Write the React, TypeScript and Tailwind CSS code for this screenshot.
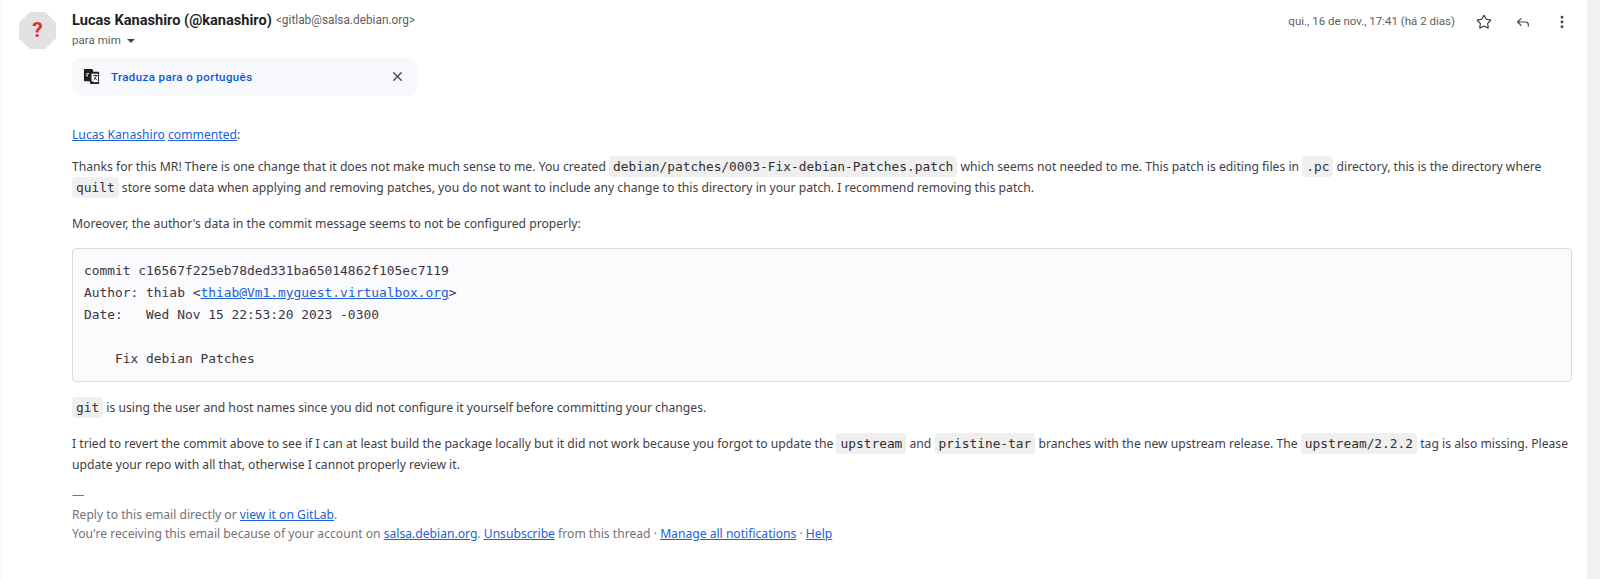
import React from "react";
import { Star, Reply, MoreVertical, X } from "lucide-react";

const A = ({ children }: { children: React.ReactNode }) => (
  <a href="#" className="text-[#1a62d6] underline">{children}</a>
);
const C = ({ children }: { children: React.ReactNode }) => (
  <code className="rounded-[4px] bg-[#efeff0] px-[4px] py-[3px] font-['DejaVu_Sans_Mono',monospace] text-[12.85px] text-[#303030]">{children}</code>
);

export default function App() {
  return (
    <div className="flex h-[579px] w-[1600px] overflow-hidden bg-white font-['Noto_Sans',sans-serif] text-[12.17px] text-[#3f3e44]">
      <div className="w-[2px] shrink-0 bg-[#f6f8fc]" />
      <main className="flex min-w-0 flex-1 flex-col">
        <header className="flex">
          <div className="ml-[17px] mt-[12px] flex h-[37px] w-[37px] shrink-0 items-center justify-center bg-[#e2e2e2] [clip-path:polygon(29%_0,71%_0,100%_29%,100%_71%,71%_100%,29%_100%,0_71%,0_29%)]">
            <span className="font-['Roboto',sans-serif] text-[21px] font-bold leading-none text-[#d93025]">?</span>
          </div>
          <div className="ml-[16px] flex-1 pt-[12px]">
            <div className="flex h-[18px] items-center font-['Roboto',sans-serif]">
              <span className="text-[14.6px] font-bold text-[#1f1f1f]">Lucas Kanashiro (@kanashiro)</span>
              <span className="ml-[4px] text-[11.85px] text-[#5e5e5e]">&lt;gitlab@salsa.debian.org&gt;</span>
            </div>
            <div className="mt-[3px] flex h-[16px] items-center font-['Roboto',sans-serif] text-[11.6px] text-[#5e5e5e]">
              para mim
              <span className="ml-[6px] h-0 w-0 border-x-[4px] border-t-[4px] border-x-transparent border-t-[#444746]" />
            </div>
            <div className="mt-[8px] flex h-[39px] w-[345px] items-center rounded-[10px] bg-[#f6f8fc] pl-[11px] pr-[12px] font-['Roboto',sans-serif]">
              <svg viewBox="0 0 18 18" className="h-[17px] w-[17px] shrink-0">
                <path d="M1 1h9l1 3h6v13H8l-1-3H1z" fill="#1f1f1f" />
                <rect x="9" y="6" width="7" height="9" fill="#fff" />
                <path d="M8 14h3l-2 3z" fill="#1f1f1f" />
                <path d="M6.5 6H4v2.5h1.3" fill="none" stroke="#fff" strokeWidth="1" />
                <path d="M10.5 8h5M13 7v1M11.5 13l3-5M12 10l3 3" stroke="#1f1f1f" strokeWidth=".9" fill="none" />
              </svg>
              <span className="ml-[11px] mt-[2px] flex-1 text-[11.5px] font-medium tracking-[0.4px] text-[#0b57d0]">Traduza para o português</span>
              <X size={15} strokeWidth={2.2} className="text-[#444746]" />
            </div>
          </div>
          <div className="flex h-[44px] shrink-0 items-center pr-[17px] text-[#444746]">
            <span className="mr-[21px] font-['Roboto',sans-serif] text-[11.5px] text-[#5e5e5e]">qui., 16 de nov., 17:41 (há 2 dias)</span>
            <Star size={16} strokeWidth={1.8} className="mr-[23px]" />
            <Reply size={16} strokeWidth={1.8} className="mr-[23px]" />
            <MoreVertical size={16} strokeWidth={2.4} />
          </div>
        </header>
        <article className="ml-[70px] mr-[15px] mt-[28px] leading-[21px]">
          <p><A>Lucas Kanashiro</A> <A>commented</A>:</p>
          <p className="mt-[11px]">
            Thanks for this MR! There is one change that it does not make much sense to me. You created <C>debian/patches/0003-Fix-debian-Patches.patch</C> which seems not needed to me. This patch is editing files in <C>.pc</C> directory, this is the directory where <C>quilt</C> store some data when applying and removing patches, you do not want to include any change to this directory in your patch. I recommend removing this patch.
          </p>
          <p className="mt-[15px]">Moreover, the author's data in the commit message seems to not be configured properly:</p>
          <pre className="mt-[14px] h-[134px] rounded-[4px] border border-[#dcdcde] bg-[#fbfafd] pl-[11px] pr-[12px] pt-[11px] font-['DejaVu_Sans_Mono',monospace] text-[12.9px] leading-[22px] text-[#3a383f]">{"commit c16567f225eb78ded331ba65014862f105ec7119\nAuthor: thiab <"}<A>thiab@Vm1.myguest.virtualbox.org</A>{">\nDate:   Wed Nov 15 22:53:20 2023 -0300\n\n    Fix debian Patches"}</pre>
          <p className="mt-[15px]"><C>git</C> is using the user and host names since you did not configure it yourself before committing your changes.</p>
          <p className="mt-[15px]">
            I tried to revert the commit above to see if I can at least build the package locally but it did not work because you forgot to update the <C>upstream</C> and <C>pristine-tar</C> branches with the new upstream release. The <C>upstream/2.2.2</C> tag is also missing. Please update your repo with all that, otherwise I cannot properly review it.
          </p>
          <footer className="mt-[10px] text-[12.13px] leading-[19.5px] text-[#737278]">
            <div>—</div>
            <div>Reply to this email directly or <A>view it on GitLab</A>.</div>
            <div>You're receiving this email because of your account on <A>salsa.debian.org</A>. <A>Unsubscribe</A> from this thread · <A>Manage all notifications</A> · <A>Help</A></div>
          </footer>
        </article>
      </main>
      <div className="w-[13px] shrink-0 bg-[#f1f1f1]" />
    </div>
  );
}
